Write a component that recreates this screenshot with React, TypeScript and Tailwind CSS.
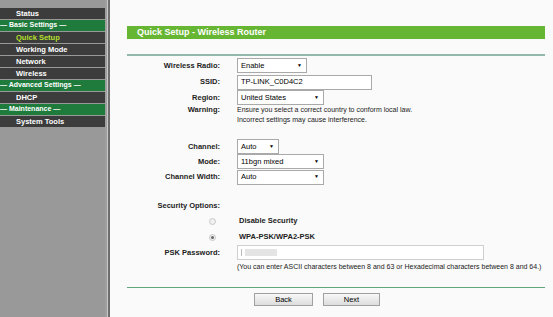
const menu = [
  { label: "Status", kind: "item" },
  { label: "— Basic Settings —", kind: "head" },
  { label: "Quick Setup", kind: "active" },
  { label: "Working Mode", kind: "item" },
  { label: "Network", kind: "item" },
  { label: "Wireless", kind: "item" },
  { label: "— Advanced Settings —", kind: "head" },
  { label: "DHCP", kind: "item" },
  { label: "— Maintenance —", kind: "head" },
  { label: "System Tools", kind: "item" },
]

const Select = ({ value, width }: { value: string; width: string }) => (
  <div
    className={`${width} h-[15px] flex items-center justify-between bg-white border border-[#a9a9a9] pl-[3px] pr-[4px] text-[7.5px] text-black`}
  >
    <span>{value}</span>
    <span className="text-[5px]">▼</span>
  </div>
)

const Label = ({ children }: { children: React.ReactNode }) => (
  <div className="text-right font-bold text-[7.5px] text-[#222]">{children}</div>
)

const Radio = ({ checked }: { checked?: boolean }) => (
  <span className="w-[7px] h-[7px] rounded-full border border-[#c8c8c8] bg-[#f0f0f0] flex items-center justify-center">
    {checked && <span className="w-[3px] h-[3px] rounded-full bg-[#666]" />}
  </span>
)

const Row = ({
  h,
  mt,
  label,
  children,
}: {
  h: string
  mt?: string
  label?: string
  children?: React.ReactNode
}) => (
  <div className={`grid grid-cols-[93px_1fr] gap-x-[17px] items-center ${h} ${mt ?? ""}`}>
    {label ? <Label>{label}</Label> : <div />}
    <div className="flex items-center">{children}</div>
  </div>
)

export default function App() {
  return (
    <div
      className="w-[553px] h-[317px] flex overflow-hidden bg-[#fafafa]"
      style={{ fontFamily: '"Liberation Sans", Arial, sans-serif' }}
    >
      <div className="w-[105px] shrink-0 bg-[#999999] pt-[8px]">
        {menu.map((m) => (
          <div
            key={m.label}
            className={`h-[11px] mb-[1px] flex items-center font-bold ${
              m.kind === "head"
                ? "bg-[#1e7b3c] text-white pl-0 text-[7px]"
                : m.kind === "active"
                  ? "bg-[#3c3c3c] text-[#b4e02c] pl-[16px] text-[7.5px]"
                  : "bg-[#3c3c3c] text-white pl-[16px] text-[7.5px]"
            }`}
          >
            {m.label}
          </div>
        ))}
      </div>
      <div className="w-[2px] shrink-0 bg-[#9f9f9f]" />
      <div className="w-[1px] shrink-0 bg-[#c8c8c8]" />
      <div className="w-[2px] shrink-0 bg-[#6e6e6e]" />

      <div className="flex-1 pl-[17px] pr-[8px] pt-[26px]">
        <div className="h-[13px] bg-[#67b633] flex items-center pl-[10px] text-white font-bold text-[9px]">
          Quick Setup - Wireless Router
        </div>
        <div className="mt-[15px] h-[2px] bg-[#93b9ac]" />

        <Row h="h-[17px]" mt="mt-[1px]" label="Wireless Radio:">
          <Select value="Enable" width="w-[70px]" />
        </Row>
        <Row h="h-[16px]" label="SSID:">
          <div className="w-[135px] h-[15px] bg-white border border-[#a9a9a9] flex items-center pl-[3px] text-[7.5px] text-black">
            TP-LINK_C0D4C2
          </div>
        </Row>
        <Row h="h-[14px]" label="Region:">
          <Select value="United States" width="w-[87px]" />
        </Row>
        <div className="grid grid-cols-[93px_1fr] gap-x-[17px] mt-[1px] text-[7px] leading-[10px]">
          <div className="text-right font-bold text-[7.5px] text-[#222]">Warning:</div>
          <div className="text-[#222]">
            Ensure you select a correct country to conform local law.
            <br />
            Incorrect settings may cause interference.
          </div>
        </div>

        <Row h="h-[15px]" mt="mt-[14px]" label="Channel:">
          <Select value="Auto" width="w-[42px]" />
        </Row>
        <Row h="h-[15px]" label="Mode:">
          <Select value="11bgn mixed" width="w-[87px]" />
        </Row>
        <Row h="h-[16px]" label="Channel Width:">
          <Select value="Auto" width="w-[87px]" />
        </Row>

        <Row h="h-[14px]" mt="mt-[14px]" label="Security Options:" />
        <div className="flex items-center h-[16px]">
          <div className="w-[89px] flex justify-end">
            <Radio />
          </div>
          <span className="ml-[23px] font-bold text-[7.5px] text-[#222]">Disable Security</span>
        </div>
        <div className="flex items-center h-[16px]">
          <div className="w-[89px] flex justify-end">
            <Radio checked />
          </div>
          <span className="ml-[23px] font-bold text-[7.5px] text-[#222]">WPA-PSK/WPA2-PSK</span>
        </div>
        <Row h="h-[15px]" label="PSK Password:">
          <div className="w-[247px] h-[15px] bg-white border border-[#cfcfcf] flex items-center pl-[3px]">
            <span className="w-[1px] h-[7px] bg-[#bbb]" />
            <span className="ml-[3px] w-[32px] h-[7px] bg-[#e4e4e4]" />
          </div>
        </Row>
        <Row h="h-[15px]">
          <span className="text-[7px] text-[#222] whitespace-nowrap">
            (You can enter ASCII characters between 8 and 63 or Hexadecimal characters between 8 and 64.)
          </span>
        </Row>

        <div className="mt-[12px] h-[1px] bg-[#5fa77a]" />
        <div className="flex mt-[5px] pl-[127px] gap-[10px]">
          <button className="w-[59px] h-[13px] border border-[#a0a0a0] bg-gradient-to-b from-[#f8f8f8] to-[#dcdcdc] text-[7.5px] text-black leading-none">
            Back
          </button>
          <button className="w-[57px] h-[13px] border border-[#a0a0a0] bg-gradient-to-b from-[#f8f8f8] to-[#dcdcdc] text-[7.5px] text-black leading-none">
            Next
          </button>
        </div>
      </div>
    </div>
  )
}
